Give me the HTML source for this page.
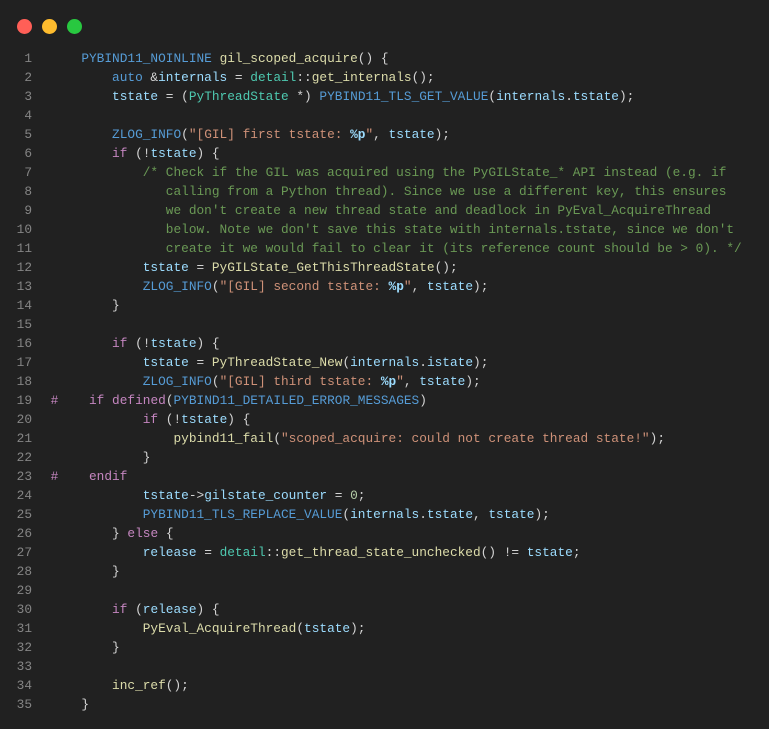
<!DOCTYPE html>
<html><head><meta charset="utf-8"><style>
html,body{margin:0;padding:0;background:#212121;width:769px;height:729px;overflow:hidden}
.dots span{position:absolute;top:19px;width:15px;height:15px;border-radius:50%}
.code{position:absolute;left:0;top:48.5px;font-family:"Liberation Mono",monospace;font-size:12.8px;color:#d4d4d4}
.l{height:19.03px;line-height:19.03px;white-space:pre;position:relative}
.n{position:absolute;left:0;width:32px;text-align:right;color:#858585}
.c{position:absolute;left:50.6px}
.m{color:#569cd6}.f{color:#dcdcaa}.v{color:#9cdcfe}.t{color:#4ec9b0}.s{color:#ce9178}.g{color:#6a9955}.k{color:#c586c0}.b{color:#d4d4d4}.num{color:#b5cea8}.p{color:#9cdcfe;font-weight:bold}
</style></head><body>
<div class="dots"><span style="left:17px;background:#ff5f57"></span><span style="left:42px;background:#febc2e"></span><span style="left:67px;background:#28c840"></span></div>
<div class="code">
<div class="l"><span class="n">1</span><span class="c">    <span class="m">PYBIND11_NOINLINE</span> <span class="f">gil_scoped_acquire</span><span class="b">()</span> <span class="b">{</span></span></div>
<div class="l"><span class="n">2</span><span class="c">        <span class="m">auto</span> &amp;<span class="v">internals</span> = <span class="t">detail</span>::<span class="f">get_internals</span><span class="b">()</span>;</span></div>
<div class="l"><span class="n">3</span><span class="c">        <span class="v">tstate</span> = <span class="b">(</span><span class="t">PyThreadState</span> *<span class="b">)</span> <span class="m">PYBIND11_TLS_GET_VALUE</span><span class="b">(</span><span class="v">internals</span>.<span class="v">tstate</span><span class="b">)</span>;</span></div>
<div class="l"><span class="n">4</span></div>
<div class="l"><span class="n">5</span><span class="c">        <span class="m">ZLOG_INFO</span><span class="b">(</span><span class="s">"[GIL] first tstate: </span><span class="p">%p</span><span class="s">"</span>, <span class="v">tstate</span><span class="b">)</span>;</span></div>
<div class="l"><span class="n">6</span><span class="c">        <span class="k">if</span> <span class="b">(</span>!<span class="v">tstate</span><span class="b">)</span> <span class="b">{</span></span></div>
<div class="l"><span class="n">7</span><span class="c g">            /* Check if the GIL was acquired using the PyGILState_* API instead (e.g. if</span></div>
<div class="l"><span class="n">8</span><span class="c g">               calling from a Python thread). Since we use a different key, this ensures</span></div>
<div class="l"><span class="n">9</span><span class="c g">               we don't create a new thread state and deadlock in PyEval_AcquireThread</span></div>
<div class="l"><span class="n">10</span><span class="c g">               below. Note we don't save this state with internals.tstate, since we don't</span></div>
<div class="l"><span class="n">11</span><span class="c g">               create it we would fail to clear it (its reference count should be &gt; 0). */</span></div>
<div class="l"><span class="n">12</span><span class="c">            <span class="v">tstate</span> = <span class="f">PyGILState_GetThisThreadState</span><span class="b">()</span>;</span></div>
<div class="l"><span class="n">13</span><span class="c">            <span class="m">ZLOG_INFO</span><span class="b">(</span><span class="s">"[GIL] second tstate: </span><span class="p">%p</span><span class="s">"</span>, <span class="v">tstate</span><span class="b">)</span>;</span></div>
<div class="l"><span class="n">14</span><span class="c">        <span class="b">}</span></span></div>
<div class="l"><span class="n">15</span></div>
<div class="l"><span class="n">16</span><span class="c">        <span class="k">if</span> <span class="b">(</span>!<span class="v">tstate</span><span class="b">)</span> <span class="b">{</span></span></div>
<div class="l"><span class="n">17</span><span class="c">            <span class="v">tstate</span> = <span class="f">PyThreadState_New</span><span class="b">(</span><span class="v">internals</span>.<span class="v">istate</span><span class="b">)</span>;</span></div>
<div class="l"><span class="n">18</span><span class="c">            <span class="m">ZLOG_INFO</span><span class="b">(</span><span class="s">"[GIL] third tstate: </span><span class="p">%p</span><span class="s">"</span>, <span class="v">tstate</span><span class="b">)</span>;</span></div>
<div class="l"><span class="n">19</span><span class="c"><span class="k">#    if</span> <span class="k">defined</span><span class="b">(</span><span class="m">PYBIND11_DETAILED_ERROR_MESSAGES</span><span class="b">)</span></span></div>
<div class="l"><span class="n">20</span><span class="c">            <span class="k">if</span> <span class="b">(</span>!<span class="v">tstate</span><span class="b">)</span> <span class="b">{</span></span></div>
<div class="l"><span class="n">21</span><span class="c">                <span class="f">pybind11_fail</span><span class="b">(</span><span class="s">"scoped_acquire: could not create thread state!"</span><span class="b">)</span>;</span></div>
<div class="l"><span class="n">22</span><span class="c">            <span class="b">}</span></span></div>
<div class="l"><span class="n">23</span><span class="c"><span class="k">#    endif</span></span></div>
<div class="l"><span class="n">24</span><span class="c">            <span class="v">tstate</span>-&gt;<span class="v">gilstate_counter</span> = <span class="num">0</span>;</span></div>
<div class="l"><span class="n">25</span><span class="c">            <span class="m">PYBIND11_TLS_REPLACE_VALUE</span><span class="b">(</span><span class="v">internals</span>.<span class="v">tstate</span>, <span class="v">tstate</span><span class="b">)</span>;</span></div>
<div class="l"><span class="n">26</span><span class="c">        <span class="b">}</span> <span class="k">else</span> <span class="b">{</span></span></div>
<div class="l"><span class="n">27</span><span class="c">            <span class="v">release</span> = <span class="t">detail</span>::<span class="f">get_thread_state_unchecked</span><span class="b">()</span> != <span class="v">tstate</span>;</span></div>
<div class="l"><span class="n">28</span><span class="c">        <span class="b">}</span></span></div>
<div class="l"><span class="n">29</span></div>
<div class="l"><span class="n">30</span><span class="c">        <span class="k">if</span> <span class="b">(</span><span class="v">release</span><span class="b">)</span> <span class="b">{</span></span></div>
<div class="l"><span class="n">31</span><span class="c">            <span class="f">PyEval_AcquireThread</span><span class="b">(</span><span class="v">tstate</span><span class="b">)</span>;</span></div>
<div class="l"><span class="n">32</span><span class="c">        <span class="b">}</span></span></div>
<div class="l"><span class="n">33</span></div>
<div class="l"><span class="n">34</span><span class="c">        <span class="f">inc_ref</span><span class="b">()</span>;</span></div>
<div class="l"><span class="n">35</span><span class="c">    <span class="b">}</span></span></div>
</div>
</body></html>
